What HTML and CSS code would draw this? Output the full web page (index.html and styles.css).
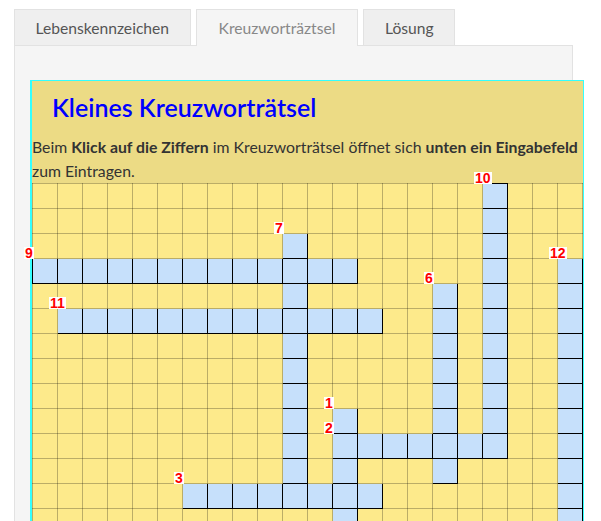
FILE: index.html
```html
<!DOCTYPE html>
<html lang="de">
<head>
<meta charset="utf-8">
<title>Kreuzworträtsel</title>
<link rel="stylesheet" href="styles.css">
</head>
<body>
<div class="page">
  <ul class="tabs">
    <li class="tab">Lebenskennzeichen</li>
    <li class="tab active">Kreuzworträztsel</li>
    <li class="tab">Lösung</li>
  </ul>
  <div class="panel">
    <div class="cw">
      <div class="cw-head">
        <h2 class="cw-title">Kleines Kreuzworträtsel</h2>
        <p class="cw-text">Beim <b>Klick auf die Ziffern</b> im Kreuzworträtsel öffnet sich <b>unten ein Eingabefeld</b> zum Eintragen.</p>
      </div>
      <table class="grid">
        <tr><td></td><td></td><td></td><td></td><td></td><td></td><td></td><td></td><td></td><td></td><td></td><td></td><td></td><td></td><td></td><td></td><td></td><td></td><td class="b num"><span class="lbl">10</span></td><td></td><td></td><td></td></tr>
        <tr><td></td><td></td><td></td><td></td><td></td><td></td><td></td><td></td><td></td><td></td><td></td><td></td><td></td><td></td><td></td><td></td><td></td><td></td><td class="b"></td><td></td><td></td><td></td></tr>
        <tr><td></td><td></td><td></td><td></td><td></td><td></td><td></td><td></td><td></td><td></td><td class="b num"><span class="lbl">7</span></td><td></td><td></td><td></td><td></td><td></td><td></td><td></td><td class="b"></td><td></td><td></td><td></td></tr>
        <tr><td class="b num"><span class="lbl">9</span></td><td class="b"></td><td class="b"></td><td class="b"></td><td class="b"></td><td class="b"></td><td class="b"></td><td class="b"></td><td class="b"></td><td class="b"></td><td class="b"></td><td class="b"></td><td class="b"></td><td></td><td></td><td></td><td></td><td></td><td class="b"></td><td></td><td></td><td class="b num"><span class="lbl">12</span></td></tr>
        <tr><td></td><td></td><td></td><td></td><td></td><td></td><td></td><td></td><td></td><td></td><td class="b"></td><td></td><td></td><td></td><td></td><td></td><td class="b num"><span class="lbl">6</span></td><td></td><td class="b"></td><td></td><td></td><td class="b"></td></tr>
        <tr><td></td><td class="b num"><span class="lbl">11</span></td><td class="b"></td><td class="b"></td><td class="b"></td><td class="b"></td><td class="b"></td><td class="b"></td><td class="b"></td><td class="b"></td><td class="b"></td><td class="b"></td><td class="b"></td><td class="b"></td><td></td><td></td><td class="b"></td><td></td><td class="b"></td><td></td><td></td><td class="b"></td></tr>
        <tr><td></td><td></td><td></td><td></td><td></td><td></td><td></td><td></td><td></td><td></td><td class="b"></td><td></td><td></td><td></td><td></td><td></td><td class="b"></td><td></td><td class="b"></td><td></td><td></td><td class="b"></td></tr>
        <tr><td></td><td></td><td></td><td></td><td></td><td></td><td></td><td></td><td></td><td></td><td class="b"></td><td></td><td></td><td></td><td></td><td></td><td class="b"></td><td></td><td class="b"></td><td></td><td></td><td class="b"></td></tr>
        <tr><td></td><td></td><td></td><td></td><td></td><td></td><td></td><td></td><td></td><td></td><td class="b"></td><td></td><td></td><td></td><td></td><td></td><td class="b"></td><td></td><td class="b"></td><td></td><td></td><td class="b"></td></tr>
        <tr><td></td><td></td><td></td><td></td><td></td><td></td><td></td><td></td><td></td><td></td><td class="b"></td><td></td><td class="b num"><span class="lbl">1</span></td><td></td><td></td><td></td><td class="b"></td><td></td><td class="b"></td><td></td><td></td><td class="b"></td></tr>
        <tr><td></td><td></td><td></td><td></td><td></td><td></td><td></td><td></td><td></td><td></td><td class="b"></td><td></td><td class="b num"><span class="lbl">2</span></td><td class="b"></td><td class="b"></td><td class="b"></td><td class="b"></td><td class="b"></td><td class="b"></td><td></td><td></td><td class="b"></td></tr>
        <tr><td></td><td></td><td></td><td></td><td></td><td></td><td></td><td></td><td></td><td></td><td class="b"></td><td></td><td class="b"></td><td></td><td></td><td></td><td class="b"></td><td></td><td></td><td></td><td></td><td class="b"></td></tr>
        <tr><td></td><td></td><td></td><td></td><td></td><td></td><td class="b num"><span class="lbl">3</span></td><td class="b"></td><td class="b"></td><td class="b"></td><td class="b"></td><td class="b"></td><td class="b"></td><td class="b"></td><td></td><td></td><td></td><td></td><td></td><td></td><td></td><td class="b"></td></tr>
        <tr><td></td><td></td><td></td><td></td><td></td><td></td><td></td><td></td><td></td><td></td><td></td><td></td><td class="b"></td><td></td><td></td><td></td><td></td><td></td><td></td><td></td><td></td><td class="b"></td></tr>
        <tr><td></td><td></td><td></td><td></td><td></td><td></td><td></td><td></td><td></td><td></td><td></td><td></td><td class="b"></td><td></td><td></td><td></td><td></td><td></td><td></td><td></td><td></td><td class="b"></td></tr>
      </table>
    </div>
  </div>
</div>
</body>
</html>
```
FILE: styles.css
```css
html, body {
  margin: 0;
  padding: 0;
  background: #fff;
}

body {
  font-family: Lato, "Open Sans", sans-serif;
  color: #333;
}

.page {
  padding: 9px 0 0 14px;
}

.tabs {
  display: flex;
  gap: 5px;
  margin: 0;
  padding: 0;
  list-style: none;
  position: relative;
  z-index: 1;
}

.tab {
  padding: 8px 20.5px 7px;
  font-size: 15.65px;
  line-height: 20px;
  color: #555;
  background: #efefef;
  border: 1px solid #e2e2e2;
  border-bottom: none;
}

.tab.active {
  color: #888;
  background: #f5f5f5;
  padding: 8px 22px;
  margin-bottom: -1px;
}

.panel {
  width: 527px;
  height: 600px;
  padding: 34px 15px 0;
  background: #f5f5f5;
  border: 1px solid #e2e2e2;
}

.cw {
  width: 551px;
  border: 1px solid #3ff;
  border-left-width: 2px;
  background: #fdea8b;
}

.cw-head {
  background: #ecdb85;
  padding-top: 11px;
}

.cw-title {
  margin: 0 0 13px;
  padding-left: 20px;
  font-size: 25px;
  line-height: 30px;
  font-weight: 600;
  color: #0000ff;
}

.cw-text {
  margin: 0;
  font-size: 15.8px;
  line-height: 24px;
  color: #333;
}

.cw-text b {
  font-weight: 700;
}

.grid {
  border-collapse: collapse;
  border-spacing: 0;
}

.grid td {
  width: 24px;
  height: 24px;
  padding: 0;
  border: 1px solid rgba(0, 0, 0, 0.26);
  background: #fdea8b;
}

.grid td.b {
  background: #c6e0fb;
  border-color: #000;
}

.grid td.num {
  position: relative;
}

.lbl {
  position: absolute;
  left: -9px;
  top: -12px;
  z-index: 2;
  padding: 0 1px;
  background: #fff;
  color: #f00;
  font-family: "Liberation Sans", Arial, sans-serif;
  font-weight: 700;
  font-size: 14px;
  line-height: 12px;
}
```
